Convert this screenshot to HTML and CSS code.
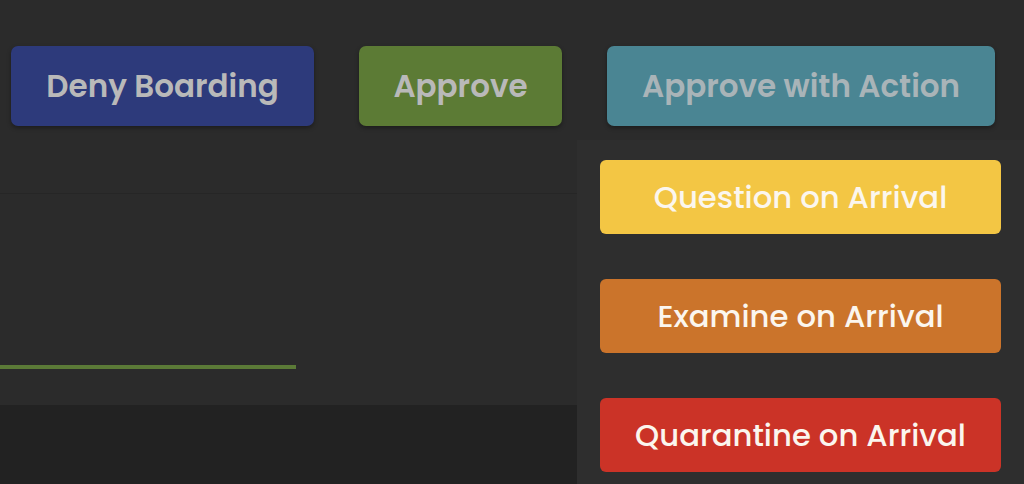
FILE: index.html
```html
<!DOCTYPE html>
<html>
<head>
<meta charset="utf-8">
<link rel="stylesheet" href="styles.css">
</head>
<body>
<div class="page">
  <header class="actions">
    <button class="btn btn-deny">Deny Boarding</button>
    <button class="btn btn-approve">Approve</button>
    <div class="dropdown">
      <button class="btn btn-action">Approve with Action</button>
      <div class="menu">
        <button class="item item-question">Question on Arrival</button>
        <button class="item item-examine">Examine on Arrival</button>
        <button class="item item-quarantine">Quarantine on Arrival</button>
      </div>
    </div>
  </header>
  <section class="content">
    <div class="progress"><div class="progress-fill" style="width:296px"></div></div>
  </section>
  <footer class="footer"></footer>
</div>
</body>
</html>
```
FILE: styles.css
```css
* { box-sizing: border-box; }
html, body { margin: 0; padding: 0; }
body {
  background: #2b2b2b;
  font-family: "Poppins", "Inter", "Open Sans", sans-serif;
  width: 1024px;
  height: 484px;
  overflow: hidden;
}
.page { display: flex; flex-direction: column; height: 484px; }
.actions {
  height: 194px;
  display: flex;
  align-items: flex-start;
  padding: 46px 0 0 11px;
  gap: 45px;
  border-bottom: 1px solid #262626;
}
.btn {
  height: 80px;
  border: none;
  border-radius: 7px;
  font-family: inherit;
  font-weight: 600;
  font-size: 31px;
  color: #b9b9b9;
  box-shadow: 0 2px 4px rgba(0,0,0,0.35);
  padding: 0;
}
.btn-deny { width: 303px; background: #2d3a7b; }
.btn-approve { width: 203px; background: #5c7b35; }
.btn-action { width: 388px; background: #4a8593; color: #a9b4b8; }
.dropdown { position: relative; }
.menu {
  position: absolute;
  top: 94px;
  left: -30px;
  width: 460px;
  height: 360px;
  background: #2e2e2e;
  display: flex;
  flex-direction: column;
  gap: 45px;
  padding: 20px 0 0 23px;
}
.item {
  width: 401px;
  height: 74px;
  border: none;
  border-radius: 6px;
  font-family: inherit;
  font-weight: 500;
  font-size: 30.7px;
  color: #fbf6ee;
  padding: 2px 0 0;
}
.item-question { background: #f3c644; }
.item-examine { background: #cb742b; }
.item-quarantine { background: #cb3327; }
.content {
  flex: 0 0 211px;
  display: flex;
  align-items: flex-end;
  padding-bottom: 36px;
}
.progress { width: 100%; height: 4px; }
.progress-fill { height: 4px; background: #5b7a37; }
.footer { flex: 1; background: #222222; }
```
